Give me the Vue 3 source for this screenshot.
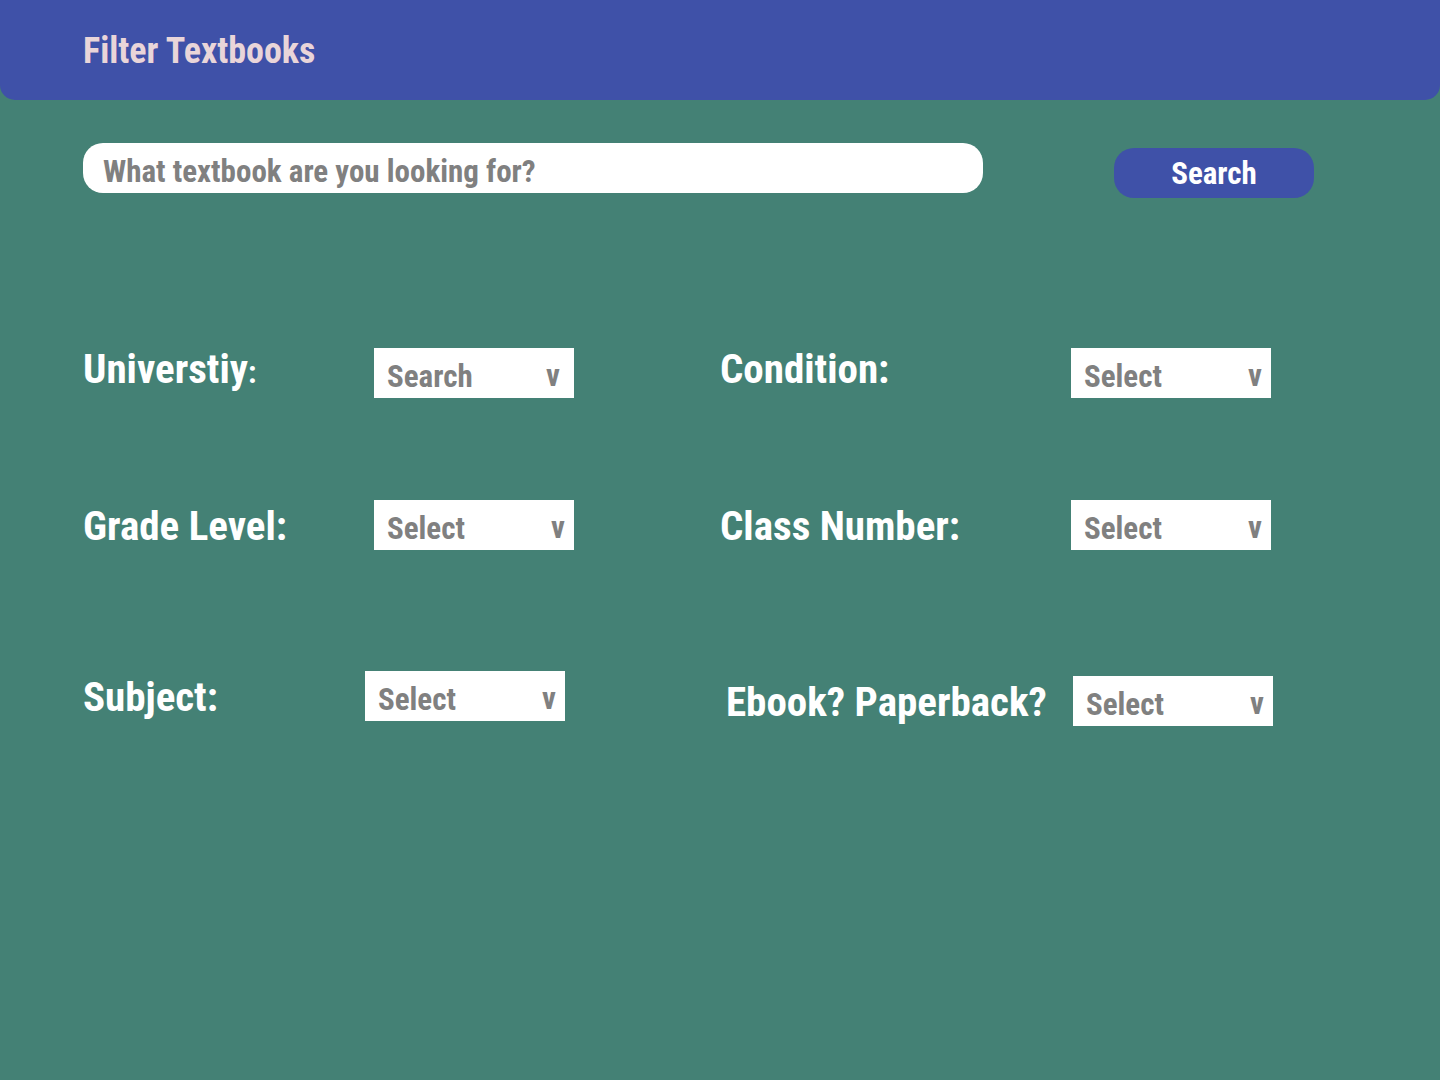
<script setup>
import { reactive, ref } from 'vue'

const query = ref('')

const rows = [
  {
    name: 'first',
    fields: [
      { id: 'university', label: 'Universtiy', smallColon: true, prompt: 'Search', inset: true },
      { id: 'condition', label: 'Condition:', prompt: 'Select' },
    ],
  },
  {
    name: 'second',
    fields: [
      { id: 'grade', label: 'Grade Level:', prompt: 'Select' },
      { id: 'class-number', label: 'Class Number:', prompt: 'Select' },
    ],
  },
  {
    name: 'third',
    fields: [
      { id: 'subject', label: 'Subject:', prompt: 'Select' },
      { id: 'format', label: 'Ebook? Paperback?', prompt: 'Select', lowered: true },
    ],
  },
]

const chosen = reactive({})
rows.forEach((row) => row.fields.forEach((field) => { chosen[field.id] = '' }))
</script>

<template>
  <div class="page">
    <header class="banner">
      <h1>Filter Textbooks</h1>
    </header>
    <main>
      <form @submit.prevent>
        <div class="search">
          <input v-model="query" type="text" aria-label="Textbook" placeholder="What textbook are you looking for?" />
          <button type="submit" class="lowered">Search</button>
        </div>
        <div class="filters">
          <div v-for="row in rows" :key="row.name" class="row" :class="row.name">
            <template v-for="field in row.fields" :key="field.id">
              <label :for="field.id" :class="{ lowered: field.lowered }">{{ field.label }}<small v-if="field.smallColon">:</small></label>
              <div class="picker" :class="{ lowered: field.lowered, inset: field.inset }">
                <select :id="field.id" v-model="chosen[field.id]">
                  <option value="">{{ field.prompt }}</option>
                </select>
                <span class="arrow" aria-hidden="true">v</span>
              </div>
            </template>
          </div>
        </div>
      </form>
    </main>
  </div>
</template>

<style>
body {
  background: #448175;
}
</style>

<style scoped>
.page,
.page input,
.page button,
.page select {
  font-family: "Roboto Condensed", "Liberation Sans Narrow", "Liberation Sans", sans-serif;
  font-weight: 700;
}

.page {
  min-height: 100vh;
  background: #448175;
  color: #fff;
}

.banner {
  display: flex;
  align-items: center;
  height: 100px;
  padding: 2px 83px 0;
  box-sizing: border-box;
  border-radius: 0 0 15px 15px;
  background: #3f51a8;
}

h1 {
  margin: 0;
  color: #e9d5d9;
  font-size: 36px;
  line-height: 44px;
}

.search {
  display: flex;
  align-items: flex-start;
  justify-content: space-between;
  padding: 43px 126px 0 83px;
}

.search input {
  flex: 0 1 900px;
  min-width: 0;
  height: 50px;
  box-sizing: border-box;
  padding: 6px 20px 0;
  border: 0;
  border-radius: 20px;
  background: #fff;
  color: #808080;
  font-size: 31px;
}

.search input::placeholder {
  color: #808080;
  opacity: 1;
}

.search button {
  width: 200px;
  height: 50px;
  padding: 0;
  border: 0;
  border-radius: 20px;
  background: #3f51a8;
  color: #fff;
  font-size: 31px;
}

.filters {
  padding: 150px 0 80px 83px;
}

.row {
  display: grid;
  grid-template-columns: 291fr 346fr 351fr 369fr;
  align-items: start;
}

.second {
  margin-top: 102px;
}

.third {
  grid-template-columns: 282fr 361fr 347fr 367fr;
  margin-top: 119px;
}

label {
  font-size: 41px;
  line-height: 52px;
  white-space: nowrap;
}

.first label {
  line-height: 42px;
}

small {
  font-size: 31px;
  line-height: 1;
}

.picker {
  position: relative;
  width: 200px;
  color: #808080;
  font-size: 31px;
}

select {
  display: block;
  width: 100%;
  height: 50px;
  box-sizing: border-box;
  padding: 6px 40px 0 13px;
  border: 0;
  border-radius: 0;
  appearance: none;
  background: #fff;
  color: inherit;
  font-size: inherit;
}

.arrow {
  position: absolute;
  top: 6px;
  right: 9px;
  line-height: 44px;
  pointer-events: none;
}

.inset .arrow {
  right: 14px;
}

.lowered {
  margin-top: 5px;
}
</style>
